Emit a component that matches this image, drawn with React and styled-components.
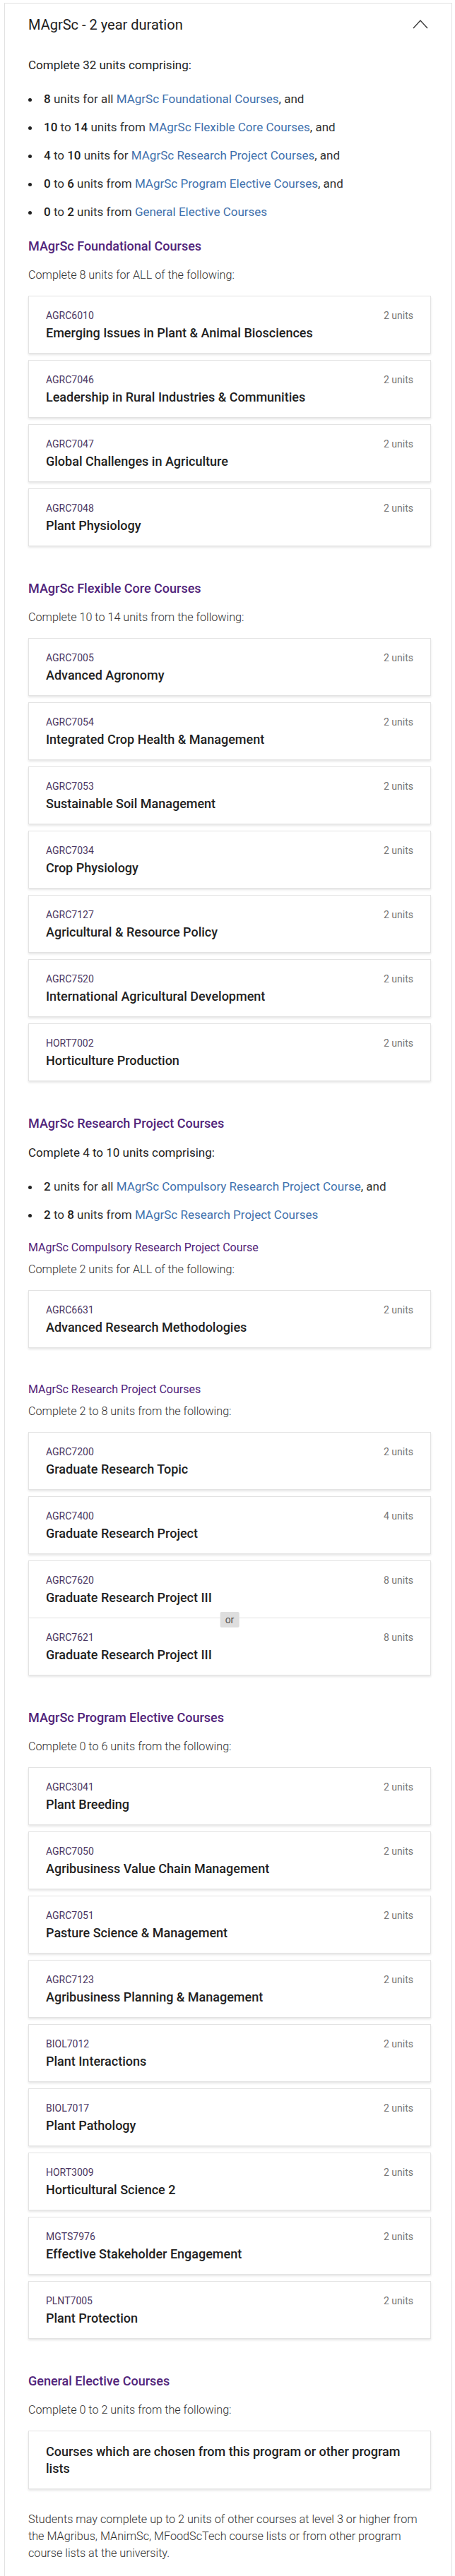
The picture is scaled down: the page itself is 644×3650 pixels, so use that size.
import React from "react";
import styled, { createGlobalStyle } from "styled-components";

const Global = createGlobalStyle`
  html, body { margin: 0; padding: 0; background: #ffffff; }
  body { font-family: Roboto, "Liberation Sans", Arial, sans-serif; color: #2a2a2a; }
  * { box-sizing: border-box; }
`;

const Panel = styled.section`
  margin: 4px 4px 0 6px;
  border: 1px solid #e2e2e2;
  border-bottom: none;
  padding: 16px 29px 40px 33px;
  background: #fff;
`;

const Header = styled.div`
  display: flex;
  align-items: center;
  justify-content: space-between;
  padding-right: 4px;
  height: 28px;
`;

const Title = styled.h2`
  margin: 0;
  font-size: 20px;
  line-height: 28px;
  font-weight: 400;
  color: #1e1e1e;
`;

const ChevronBtn = styled.span`
  display: flex;
  width: 24px;
  height: 24px;
  color: #3a3a3a;
`;

const Lead = styled.p`
  margin: ${(p) => p.$mt || 0}px 0 0;
  font-size: ${(p) => (p.$light ? 16.2 : 17)}px;
  line-height: 24px;
  font-weight: ${(p) => (p.$light ? 300 : 400)};
  color: ${(p) => (p.$light ? "#303030" : "#222")};
`;

const Bullets = styled.ul`
  list-style: none;
  margin: 24px 0 0;
  padding: 0;
  display: flex;
  flex-direction: column;
  gap: 16px;
`;

const Item = styled.li`
  display: flex;
  align-items: center;
  font-size: 17px;
  line-height: 24px;
  color: #333;
`;

const Dot = styled.span`
  flex: none;
  width: 5px;
  height: 5px;
  border-radius: 50%;
  background: #222;
  margin-right: 17px;
  margin-top: 2px;
`;

const Num = styled.strong`
  font-weight: 500;
  color: #1e1e1e;
`;

const Link = styled.a`
  color: #3f71ad;
  text-decoration: none;
`;

const Heading = styled.h3`
  margin: ${(p) => p.$mt}px 0 0;
  font-size: ${(p) => (p.$sub ? 16 : 18)}px;
  line-height: 24px;
  font-weight: ${(p) => (p.$sub ? 400 : 500)};
  color: #51247a;
`;

const CardList = styled.div`
  margin-top: 17px;
  display: flex;
  flex-direction: column;
  gap: 9px;
`;

const Card = styled.div`
  position: relative;
  background: #fff;
  border: 1px solid #e3e3e3;
  box-shadow: 0 2px 3px rgba(0, 0, 0, 0.1);
`;

const CardRow = styled.div`
  padding: 17px 24px 16px 24px;
  & + & {
    border-top: 1px solid #e0e0e0;
  }
`;

const TopLine = styled.div`
  display: flex;
  justify-content: space-between;
  font-size: 14px;
  line-height: 20px;
  margin-bottom: 3px;
`;

const Code = styled.span`
  color: #4b3763;
`;

const Units = styled.span`
  color: #777;
`;

const CourseName = styled.div`
  font-size: 18px;
  line-height: 24px;
  font-weight: 500;
  color: #1f1f1f;
`;

const OrBadge = styled.span`
  position: absolute;
  left: 50%;
  top: 72px;
  transform: translateX(-50%);
  height: 22px;
  padding: 0 7px;
  background: #dedede;
  border-radius: 2px;
  font-size: 14px;
  line-height: 22px;
  color: #555;
`;

const Note = styled.p`
  margin: 31px 0 0;
  font-size: 16.2px;
  line-height: 24px;
  font-weight: 300;
  color: #303030;
`;

const Chevron = () => (
  <ChevronBtn>
    <svg width="24" height="24" viewBox="0 0 24 24" fill="none">
      <polyline points="3,17 13,6 23,17" stroke="currentColor" strokeWidth="1.4" />
    </svg>
  </ChevronBtn>
);

const Course = ({ code, title, units }) => (
  <Card>
    <CardRow>
      <TopLine>
        <Code>{code}</Code>
        <Units>{units} units</Units>
      </TopLine>
      <CourseName>{title}</CourseName>
    </CardRow>
  </Card>
);

const Courses = ({ list }) => (
  <CardList>
    {list.map(([c, t, u]) => (
      <Course key={c} code={c} title={t} units={u} />
    ))}
  </CardList>
);

const foundational = [
  ["AGRC6010", "Emerging Issues in Plant & Animal Biosciences", 2],
  ["AGRC7046", "Leadership in Rural Industries & Communities", 2],
  ["AGRC7047", "Global Challenges in Agriculture", 2],
  ["AGRC7048", "Plant Physiology", 2],
];

const flexible = [
  ["AGRC7005", "Advanced Agronomy", 2],
  ["AGRC7054", "Integrated Crop Health & Management", 2],
  ["AGRC7053", "Sustainable Soil Management", 2],
  ["AGRC7034", "Crop Physiology", 2],
  ["AGRC7127", "Agricultural & Resource Policy", 2],
  ["AGRC7520", "International Agricultural Development", 2],
  ["HORT7002", "Horticulture Production", 2],
];

const research = [
  ["AGRC7200", "Graduate Research Topic", 2],
  ["AGRC7400", "Graduate Research Project", 4],
];

const electives = [
  ["AGRC3041", "Plant Breeding", 2],
  ["AGRC7050", "Agribusiness Value Chain Management", 2],
  ["AGRC7051", "Pasture Science & Management", 2],
  ["AGRC7123", "Agribusiness Planning & Management", 2],
  ["BIOL7012", "Plant Interactions", 2],
  ["BIOL7017", "Plant Pathology", 2],
  ["HORT3009", "Horticultural Science 2", 2],
  ["MGTS7976", "Effective Stakeholder Engagement", 2],
  ["PLNT7005", "Plant Protection", 2],
];

export default function App() {
  return (
    <>
      <Global />
      <Panel>
        <Header>
          <Title>MAgrSc - 2 year duration</Title>
          <Chevron />
        </Header>

        <Lead $mt={31}>Complete 32 units comprising:</Lead>
        <Bullets>
          <Item><Dot /><span><Num>8</Num> units for all <Link href="#">MAgrSc Foundational Courses</Link>, and</span></Item>
          <Item><Dot /><span><Num>10</Num> to <Num>14</Num> units from <Link href="#">MAgrSc Flexible Core Courses</Link>, and</span></Item>
          <Item><Dot /><span><Num>4</Num> to <Num>10</Num> units for <Link href="#">MAgrSc Research Project Courses</Link>, and</span></Item>
          <Item><Dot /><span><Num>0</Num> to <Num>6</Num> units from <Link href="#">MAgrSc Program Elective Courses</Link>, and</span></Item>
          <Item><Dot /><span><Num>0</Num> to <Num>2</Num> units from <Link href="#">General Elective Courses</Link></span></Item>
        </Bullets>

        <Heading $mt={25}>MAgrSc Foundational Courses</Heading>
        <Lead $light $mt={17}>Complete 8 units for ALL of the following:</Lead>
        <Courses list={foundational} />

        <Heading $mt={48}>MAgrSc Flexible Core Courses</Heading>
        <Lead $light $mt={17}>Complete 10 to 14 units from the following:</Lead>
        <Courses list={flexible} />

        <Heading $mt={48}>MAgrSc Research Project Courses</Heading>
        <Lead $mt={17}>Complete 4 to 10 units comprising:</Lead>
        <Bullets>
          <Item><Dot /><span><Num>2</Num> units for all <Link href="#">MAgrSc Compulsory Research Project Course</Link>, and</span></Item>
          <Item><Dot /><span><Num>2</Num> to <Num>8</Num> units from <Link href="#">MAgrSc Research Project Courses</Link></span></Item>
        </Bullets>

        <Heading $sub $mt={23}>MAgrSc Compulsory Research Project Course</Heading>
        <Lead $light $mt={7}>Complete 2 units for ALL of the following:</Lead>
        <Courses list={[["AGRC6631", "Advanced Research Methodologies", 2]]} />

        <Heading $sub $mt={47}>MAgrSc Research Project Courses</Heading>
        <Lead $light $mt={7}>Complete 2 to 8 units from the following:</Lead>
        <CardList>
          {research.map(([c, t, u]) => (
            <Course key={c} code={c} title={t} units={u} />
          ))}
          <Card>
            <CardRow>
              <TopLine>
                <Code>AGRC7620</Code>
                <Units>8 units</Units>
              </TopLine>
              <CourseName>Graduate Research Project III</CourseName>
            </CardRow>
            <CardRow>
              <TopLine>
                <Code>AGRC7621</Code>
                <Units>8 units</Units>
              </TopLine>
              <CourseName>Graduate Research Project III</CourseName>
            </CardRow>
            <OrBadge>or</OrBadge>
          </Card>
        </CardList>

        <Heading $mt={48}>MAgrSc Program Elective Courses</Heading>
        <Lead $light $mt={17}>Complete 0 to 6 units from the following:</Lead>
        <Courses list={electives} />

        <Heading $mt={48}>General Elective Courses</Heading>
        <Lead $light $mt={17}>Complete 0 to 2 units from the following:</Lead>
        <CardList>
          <Card>
            <CardRow>
              <CourseName>Courses which are chosen from this program or other program lists</CourseName>
            </CardRow>
          </Card>
        </CardList>

        <Note>
          Students may complete up to 2 units of other courses at level 3 or higher from the MAgribus, MAnimSc, MFoodScTech course lists or from other program course lists at the university.
        </Note>
      </Panel>
    </>
  );
}
